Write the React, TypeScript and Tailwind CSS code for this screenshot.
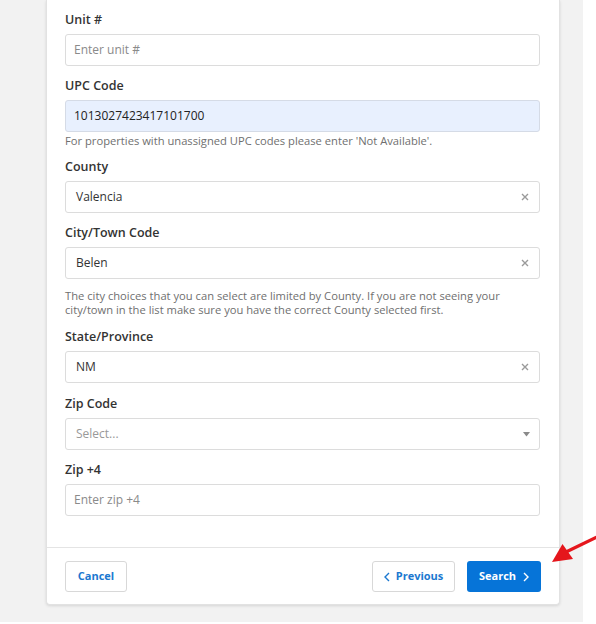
import React from 'react'

const font = { fontFamily: '"Open Sans", "Noto Sans", Arial, sans-serif' }

function Label({ children }: { children: React.ReactNode }) {
  return <div className="text-[12.5px] font-semibold leading-[18px] text-[#333] mb-[5px]">{children}</div>
}

function TextInput({ placeholder, value, filled }: { placeholder?: string; value?: string; filled?: boolean }) {
  return (
    <div
      className={`h-[32px] rounded-[3px] border flex items-center px-[8px] text-[12px] ${
        filled ? 'bg-[#e8f0fe] border-[#d5dbe6] text-[#222]' : 'bg-white border-[#dcdcdc] text-[#8a8a8a]'
      }`}
    >
      {value ?? placeholder}
    </div>
  )
}

function SelectInput({ value, placeholder }: { value?: string; placeholder?: string }) {
  return (
    <div className="h-[32px] rounded-[3px] border border-[#dcdcdc] bg-white flex items-center pl-[10px] pr-[9px] text-[12px]">
      <span className={`flex-1 ${value ? 'text-[#333]' : 'text-[#999]'}`}>{value ?? placeholder}</span>
      {value ? (
        <svg width="8" height="8" viewBox="0 0 8 8" className="mr-[1px]">
          <path d="M1 1 L7 7 M7 1 L1 7" stroke="#9a9a9a" strokeWidth="1.4" />
        </svg>
      ) : (
        <svg width="7" height="5" viewBox="0 0 7 5">
          <path d="M0 0 H7 L3.5 4.5 Z" fill="#8a8a8a" />
        </svg>
      )}
    </div>
  )
}

function Field({ label, children, gap = 'mt-[11px]' }: { label: string; children: React.ReactNode; gap?: string }) {
  return (
    <div className={gap}>
      <Label>{label}</Label>
      {children}
    </div>
  )
}

export default function App() {
  return (
    <div className="w-[596px] h-[624px] bg-white relative overflow-hidden" style={font}>
      <div className="w-[583px] h-[622px] bg-[#f2f2f2] pl-[46px]">
        <div className="w-[514px] bg-white border-x border-b border-[#e2e2e2] rounded-b-[4px] shadow-[0_1px_3px_rgba(0,0,0,0.12)]">
          {/* Form body */}
          <div className="pt-[11px] pb-[31px] pl-[18px] pr-[19px]">
            <Field label="Unit #" gap="">
              <TextInput placeholder="Enter unit #" />
            </Field>
            <Field label="UPC Code">
              <TextInput value="1013027423417101700" filled />
            </Field>
            <div className="pt-[2px] text-[11.2px] leading-[13px] text-[#6f6f6f]">
              For properties with unassigned UPC codes please enter 'Not Available'.
            </div>
            <Field label="County">
              <SelectInput value="Valencia" />
            </Field>
            <Field label="City/Town Code">
              <SelectInput value="Belen" />
            </Field>
            <div className="mt-[10px] text-[11.2px] leading-[14px] text-[#6f6f6f]">
              The city choices that you can select are limited by County. If you are not seeing your
              <br />
              city/town in the list make sure you have the correct County selected first.
            </div>
            <Field label="State/Province">
              <SelectInput value="NM" />
            </Field>
            <Field label="Zip Code" gap="mt-[12px]">
              <SelectInput placeholder="Select..." />
            </Field>
            <Field label="Zip +4">
              <TextInput placeholder="Enter zip +4" />
            </Field>
          </div>

          {/* Footer */}
          <div className="border-t border-[#e4e4e4] pt-[13px] pb-[12px] pl-[18px] pr-[18px] flex items-center">
            <button className="h-[31px] w-[62px] rounded-[3px] border border-[#d8d8d8] bg-white text-[11px] font-bold text-[#1b78d0]">
              Cancel
            </button>
            <div className="flex-1" />
            <button className="h-[31px] w-[83px] rounded-[3px] border border-[#d8d8d8] bg-white text-[11px] font-bold text-[#1b78d0] flex items-center justify-center gap-[6px]">
              <svg width="6" height="10" viewBox="0 0 6 10">
                <path d="M5 1 L1 5 L5 9" stroke="#1b78d0" strokeWidth="1.4" fill="none" />
              </svg>
              Previous
            </button>
            <button className="ml-[12px] h-[31px] w-[74px] rounded-[3px] bg-[#0674d8] text-[11px] font-bold text-white flex items-center justify-center gap-[7px]">
              Search
              <svg width="6" height="10" viewBox="0 0 6 10">
                <path d="M1 1 L5 5 L1 9" stroke="#ffffff" strokeWidth="1.4" fill="none" />
              </svg>
            </button>
          </div>
        </div>
      </div>

      {/* Annotation arrow */}
      <svg className="absolute left-[548px] top-[532px]" width="48" height="34" viewBox="548 532 48 34">
        <path d="M596 537.5 L566 552" stroke="#e5161c" strokeWidth="3.2" strokeLinecap="round" />
        <path d="M552 562 L562.5 544 L573 559 Z" fill="#e5161c" />
      </svg>
    </div>
  )
}
